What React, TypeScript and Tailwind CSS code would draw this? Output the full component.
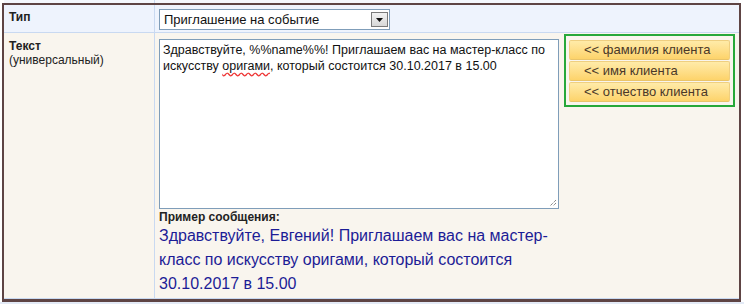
const font = "[font-family:'Liberation_Sans',Arial,sans-serif]";

function InsertButton({ label }: { label: string }) {
  return (
    <button
      type="button"
      className="h-[20px] w-full rounded-[2px] border border-[#efcf80] border-b-[#e9c46a] bg-gradient-to-b from-[#ffeba8] to-[#fdd36a] pl-[14px] text-left text-[13px] leading-[18px] text-[#4a3828]"
    >
      {label}
    </button>
  );
}

export default function App() {
  return (
    <div className={`h-[304px] w-[744px] overflow-hidden bg-white ${font}`}>
      {/* tail of the previous row */}
      <div className="ml-[4px] flex h-[3px] w-[735px] bg-[#f4f7fd]">
        <div className="w-[151px] border-r border-[#c9d9f1]" />
      </div>

      <div className="ml-[2px] w-[739px] border-2 border-b-[3px] border-[#5e4444]">
        {/* Тип */}
        <div className="flex h-[28px] border-b border-[#c9d9f1] bg-[#eef3fd]">
          <div className="w-[151px] shrink-0 border-r border-[#c9d9f1] pl-[5px] pt-[5px] text-[12px] font-bold leading-[14px] text-[#222]">
            Тип
          </div>
          <div className="pl-[4px] pt-[4px]">
            <div className="flex h-[21px] w-[231px] items-center border border-[#7f9db9] bg-white pl-[4px]">
              <span className="flex-1 text-[13px] leading-[16px] text-[#111]">Приглашение на событие</span>
              <span className="mr-[1px] flex h-[15px] w-[17px] items-center justify-center border border-[#7a7a7a] bg-gradient-to-b from-[#f2f2f2] to-[#d8d8d8]">
                <svg width="7" height="4" viewBox="0 0 7 4">
                  <path d="M0 0h7L3.5 4z" fill="#111" />
                </svg>
              </span>
            </div>
          </div>
        </div>

        {/* Текст */}
        <div className="flex h-[266px] border-b border-[#c9d9f1] bg-[#f9f5ee]">
          <div className="w-[151px] shrink-0 border-r border-[#c9d9f1] pl-[5px] pt-[6px] text-[12px] leading-[14px] text-[#222]">
            <div className="font-bold">Текст</div>
            <div>(универсальный)</div>
          </div>
          <div className="flex gap-[5px] pl-[4px]">
            <div className="flex w-[400px] flex-col pt-[6px]">
              <div className="relative h-[170px] border border-[#7f9db9] bg-white px-[3px] pt-[2px] text-[12.5px] leading-[16px] text-[#111]">
                Здравствуйте, %%name%%! Приглашаем вас на мастер-класс по искусству{" "}
                <span className="underline decoration-wavy decoration-[#e33] underline-offset-2">оригами</span>, который
                состоится 30.10.2017 в 15.00
                <svg className="absolute bottom-[1px] right-[1px]" width="9" height="9" viewBox="0 0 9 9">
                  <path d="M8 2L2 8M8 5L5 8" stroke="#555" strokeWidth="1" strokeDasharray="1 1" />
                </svg>
              </div>
              <div className="mt-[1px] text-[12px] font-bold leading-[14px] text-[#222]">Пример сообщения:</div>
              <p className="text-[16px] leading-[24px] text-[#1c1c96]">
                Здравствуйте, Евгений! Приглашаем вас на мастер-класс по искусству оригами, который состоится
                30.10.2017 в 15.00
              </p>
            </div>
            <div className="pt-[1px]">
              <div className="flex w-[171px] flex-col gap-[1px] border-2 border-[#27a83a] px-[3px] pb-[3px] pt-[4px]">
                <InsertButton label="<< фамилия клиента" />
                <InsertButton label="<< имя клиента" />
                <InsertButton label="<< отчество клиента" />
              </div>
            </div>
          </div>
        </div>
      </div>
      <div className="h-[2px] bg-[#e3eaf6]" />
    </div>
  );
}
